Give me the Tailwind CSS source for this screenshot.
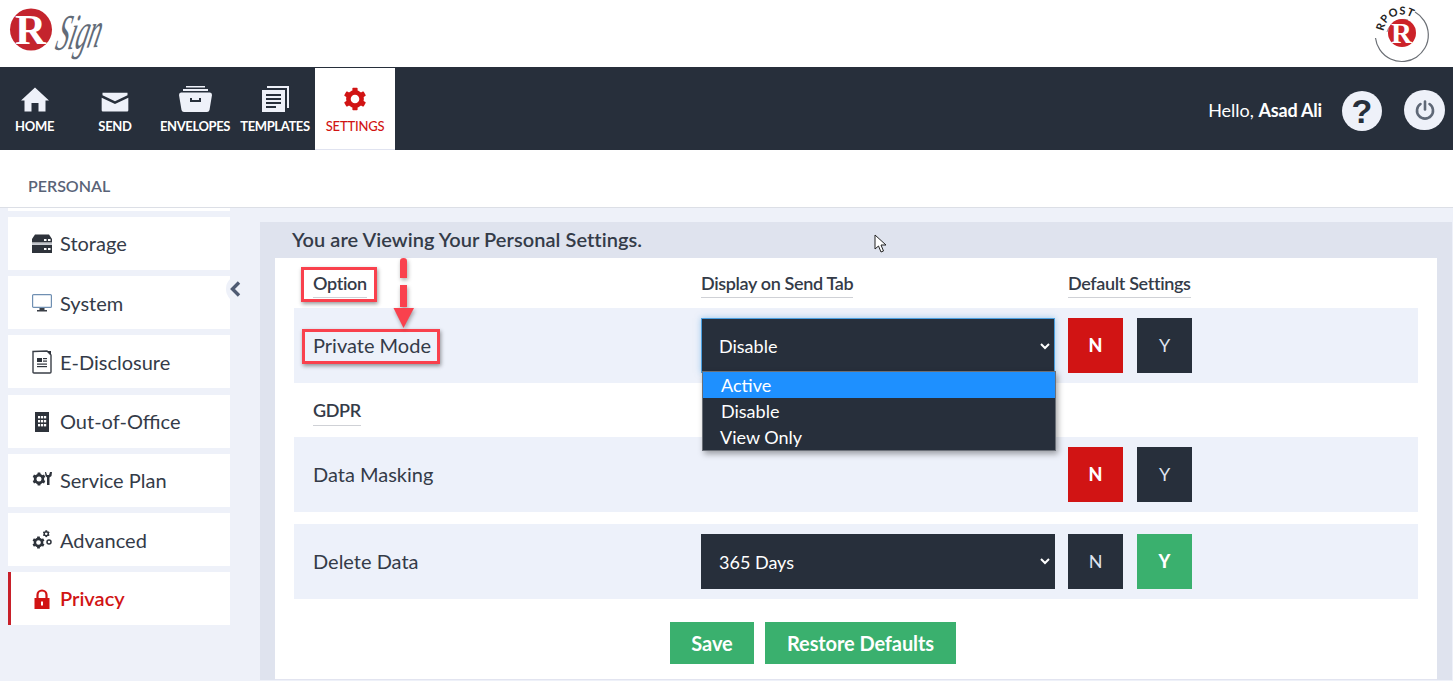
<!DOCTYPE html>
<html lang="en">
<head>
    <meta charset="utf-8" />
    <meta name="viewport" content="width=device-width, initial-scale=1.0" />
    <title>RSign Personal Settings</title>
    <script src="https://cdn.jsdelivr.net/npm/@tailwindcss/browser@4"></script>
</head>
<body class="relative w-[1453px] h-[681px] overflow-hidden bg-[#eef1f9] font-['Lato',sans-serif] text-[#343b48]">
    <!-- Shared cog shape -->
    <svg width="0" height="0" class="absolute">
        <symbol id="cog" viewBox="0 0 24 24">
            <circle cx="12" cy="12" r="6.6" fill="none" stroke="currentColor" stroke-width="4.6" />
            <g fill="currentColor">
                <rect x="9.4" y="0.8" width="5.2" height="6" rx="0.8" />
                <rect x="9.4" y="0.8" width="5.2" height="6" rx="0.8" transform="rotate(60 12 12)" />
                <rect x="9.4" y="0.8" width="5.2" height="6" rx="0.8" transform="rotate(120 12 12)" />
                <rect x="9.4" y="0.8" width="5.2" height="6" rx="0.8" transform="rotate(180 12 12)" />
                <rect x="9.4" y="0.8" width="5.2" height="6" rx="0.8" transform="rotate(240 12 12)" />
                <rect x="9.4" y="0.8" width="5.2" height="6" rx="0.8" transform="rotate(300 12 12)" />
            </g>
        </symbol>
    </svg>

    <!-- Logo bar -->
    <header class="h-[67px] bg-white flex justify-between">
        <svg width="120" height="67" viewBox="0 0 120 67">
            <circle cx="31" cy="29.5" r="21" fill="#c4242d" />
            <text x="15" y="44" font-family="Liberation Serif" font-weight="700" font-size="43" fill="#fff">R</text>
            <g transform="translate(54 50) rotate(-4) skewX(-18) scale(0.5 1)">
                <text x="0" y="0" font-family="Liberation Serif" font-style="italic" font-size="50" fill="#626b78">Sign</text>
            </g>
        </svg>
        <svg width="80" height="67" viewBox="1373 0 80 67">
            <path d="M1415 12 A26.500 26.500 0 1 1 1375.500 38" fill="none" stroke="#6b6f75" stroke-width="1.2" />
            <path d="M1387 32 A17 17 0 0 1 1408 20" fill="none" stroke="#9a9da2" stroke-width="1" />
            <path id="rpostArc" d="M1383.600 31.400 A18.500 18.500 0 0 1 1414 19" fill="none" />
            <text font-family="Lato" font-weight="700" font-size="11" fill="#222" letter-spacing="0.6"><textPath href="#rpostArc">RPOST</textPath></text>
            <circle cx="1402" cy="33" r="14" fill="#cc2229" />
            <text x="1391" y="43" font-family="Liberation Serif" font-weight="700" font-size="29" fill="#fff">R</text>
        </svg>
    </header>

    <!-- Main nav -->
    <nav class="h-[83px] bg-[#272f3b] flex text-white text-[13px] leading-[20px] font-bold">
        <a class="w-[75px] pl-[15px] pt-[19px] flex flex-col items-start">
            <span class="h-[26px] flex items-end ml-[6px]">
                <svg class="w-[28px] h-[25px]" viewBox="0 0 28 24" fill="#eef1f9"><path d="M14 0 L28 13 L24.500 13 L24.500 24 L17.500 24 L17.500 15.500 L10.500 15.500 L10.500 24 L3.500 24 L3.500 13 L0 13 Z" /></svg>
            </span>
            <span class="mt-[4px] tracking-[-0.3px]">HOME</span>
        </a>
        <a class="w-[80px] pt-[19px] flex flex-col items-center">
            <span class="h-[26px] flex items-end">
                <svg class="w-[32px] h-[20px]" viewBox="0 0 32 24" fill="#eef1f9"><path d="M1 1 L31 1 L31 4 L16 11 L1 4 Z" /><path d="M0 7 L16 14.500 L32 7 L32 22 Q32 23.500 30.500 23.500 L1.500 23.500 Q0 23.500 0 22 Z" /></svg>
            </span>
            <span class="mt-[4px] tracking-[-0.3px]">SEND</span>
        </a>
        <a class="w-[80px] pt-[19px] flex flex-col items-center">
            <span class="h-[26px] flex items-end">
                <svg class="w-[33px] h-[26px]" viewBox="0 0 33 26" fill="#eef1f9"><rect x="7" y="0" width="19" height="1.500" /><rect x="4" y="3" width="25" height="2" /><path d="M2 6.500 L31 6.500 Q33 6.500 33 9 L30.500 24 Q30 26 28 26 L5 26 Q3 26 2.500 24 L0 9 Q0 6.500 2 6.500 Z M11 12 L11 16 L22 16 L22 12 L20 12 L20 14 L13 14 L13 12 Z" fill-rule="evenodd" /></svg>
            </span>
            <span class="mt-[4px] tracking-[-0.4px]">ENVELOPES</span>
        </a>
        <a class="w-[80px] pt-[19px] flex flex-col items-center">
            <span class="h-[26px] flex items-end">
                <svg class="w-[27px] h-[26px]" viewBox="0 0 27 26" fill="#eef1f9"><path d="M5 0 L27 0 L27 22 L25 22 L25 2 L5 2 Z" /><path d="M0 4 L23 4 L23 26 L0 26 Z M4 8 L4 10 L19 10 L19 8 Z M4 12 L4 14 L19 14 L19 12 Z M4 16 L4 18 L19 18 L19 16 Z M4 20 L4 22 L14 22 L14 20 Z" fill-rule="evenodd" /></svg>
            </span>
            <span class="mt-[4px] tracking-[-0.4px]">TEMPLATES</span>
        </a>
        <a class="w-[80px] h-[82px] mt-px bg-white border-b border-[#e0e3f0] flex flex-col items-center pt-[19px] text-[#d11414] font-medium">
            <svg class="w-[24px] h-[24px]"><use href="#cog" /></svg>
            <span class="mt-[5px] tracking-[-0.2px]">SETTINGS</span>
        </a>
        <div class="ml-auto flex items-center pr-[8px] pt-[3px] font-normal">
            <span class="text-[18px] leading-[24px]">Hello, <b class="font-bold tracking-[-0.2px]">Asad Ali</b></span>
            <span class="ml-[20px] mt-px w-[40px] h-[40px] rounded-full bg-[#eef1f9] text-[#272f3b] flex items-center justify-center text-[34px] leading-none font-bold font-['Liberation_Sans',sans-serif]">?</span>
            <span class="ml-[22px] w-[41px] h-[40px] rounded-full bg-[#eef1f9] flex items-center justify-center">
                <svg class="w-[20px] h-[20px]" viewBox="0 0 20 20" fill="none" stroke="#5f6877" stroke-width="2.600" stroke-linecap="round"><path d="M10 1.500 L10 9.500" /><path d="M5.500 4 A8 8 0 1 0 14.500 4" /></svg>
            </span>
        </div>
    </nav>

    <!-- Section title -->
    <div class="h-[58px] bg-white border-b border-[#dcdfe6] pl-[28px] pt-[27px] text-[16px] leading-[18px] font-semibold text-[#596377]">PERSONAL</div>

    <div class="flex">
        <!-- Settings menu -->
        <aside class="relative w-[260px] pl-[8px] pr-[30px] flex flex-col gap-[6px] text-[20px]">
            <div class="h-[3px] bg-white"></div>
            <a class="h-[53px] bg-white flex items-center pl-[24px] gap-[8px]">
                <svg class="w-[20px] h-[20px]" viewBox="0 0 20 20"><path d="M3 0.500 L17 0.500 L20 5 L20 8.500 L0 8.500 L0 5 Z" fill="#2e333b" /><rect y="11" width="20" height="8" fill="#2e333b" /><rect y="8.800" width="20" height="2" fill="#bfc3c9" /><rect x="12" y="5" width="2.500" height="2" fill="#fff" /><rect x="16" y="5" width="2.500" height="2" fill="#fff" /><rect x="12" y="14" width="2.500" height="2" fill="#fff" /><rect x="16" y="14" width="2.500" height="2" fill="#fff" /></svg>
                <span class="mb-px">Storage</span>
            </a>
            <a class="h-[53px] bg-white flex items-center pl-[24px] gap-[8px]">
                <svg class="w-[20px] h-[20px]" viewBox="0 0 20 20"><rect x="0.600" y="1.600" width="18.800" height="12.800" rx="1" fill="#fff" stroke="#6f8fb2" stroke-width="1.200" /><rect x="7.500" y="15" width="5" height="2" fill="#3a3f47" /><rect x="5" y="17" width="10" height="1.500" fill="#3a3f47" /></svg>
                <span>System</span>
            </a>
            <a class="h-[53px] bg-white flex items-center pl-[24px] gap-[8px]">
                <svg class="w-[20px] h-[24px]" viewBox="0 0 20 24"><path d="M1 1.500 L15 1 L19 5 L19 22 Q19 23 18 23 L2 23 Q1 23 1 22 Z" fill="#fff" stroke="#3a3f47" stroke-width="1.400" /><path d="M15 1 L19 1 L19 5 Z" fill="#2e333b" /><rect x="5" y="8" width="5" height="4" fill="#2e333b" /><rect x="11" y="8" width="4" height="1.200" fill="#2e333b" /><rect x="11" y="10.500" width="4" height="1.200" fill="#2e333b" /><rect x="5" y="13.500" width="10" height="1.200" fill="#2e333b" /><rect x="5" y="16" width="10" height="1.200" fill="#2e333b" /></svg>
                <span>E-Disclosure</span>
            </a>
            <a class="h-[53px] mt-px bg-white flex items-center pl-[24px] gap-[8px]">
                <svg class="w-[20px] h-[20px]" viewBox="0 0 20 20"><path d="M3 0 L17 0 L17 20 L3 20 Z" fill="#2e333b" /><g fill="#fff"><rect x="6" y="4" width="2.200" height="2.400" /><rect x="9" y="4" width="2.200" height="2.400" /><rect x="12" y="4" width="2.200" height="2.400" /><rect x="6" y="8" width="2.200" height="2.400" /><rect x="9" y="8" width="2.200" height="2.400" /><rect x="12" y="8" width="2.200" height="2.400" /><rect x="6" y="12" width="2.200" height="2.400" /><rect x="9" y="12" width="2.200" height="2.400" /><rect x="12" y="12" width="2.200" height="2.400" /></g></svg>
                <span class="mb-px">Out-of-Office</span>
            </a>
            <a class="h-[53px] bg-white flex items-center pl-[24px] gap-[8px]">
                <svg class="w-[20px] h-[20px] text-[#2e333b]" viewBox="0 0 20 20"><use href="#cog" width="14" height="14" y="1" /><path d="M14 1 L15 4 L17 4 L18 1 L20 1 L19.500 5 L17.500 6.500 L17.500 14 L15 14 L15 6.500 L13.500 5 L13 1 Z" fill="currentColor" /></svg>
                <span class="mb-px">Service Plan</span>
            </a>
            <a class="h-[53px] bg-white flex items-center pl-[24px] gap-[8px]">
                <svg class="w-[20px] h-[20px] text-[#2e333b]" viewBox="0 0 20 20"><use href="#cog" width="13" height="13" y="6" /><use href="#cog" width="7.500" height="7.500" x="10.500" y="0" /><circle cx="17" cy="12" r="2" fill="none" stroke="currentColor" stroke-width="1.500" /></svg>
                <span>Advanced</span>
            </a>
            <a class="h-[53px] bg-white border-l-[3px] border-[#c8202a] flex items-center pl-[21px] gap-[8px] text-[#d11414] font-semibold">
                <svg class="w-[20px] h-[20px]" viewBox="0 0 20 20"><path d="M5.500 9 L5.500 6 A4.500 4.500 0 0 1 14.500 6 L14.500 9" fill="none" stroke="#d11414" stroke-width="2.200" /><path d="M2.500 9 L17.500 9 L17.500 20 L2.500 20 Z M9 12.500 L9 16.500 L11 16.500 L11 12.500 Z" fill="#d11414" fill-rule="evenodd" /></svg>
                <span class="mb-px">Privacy</span>
            </a>
            <!-- Collapse handle -->
            <div class="absolute left-[226px] top-[67px] w-[16px] h-[28px] rounded-l-full bg-[#eef1f9] flex items-center justify-center">
                <svg class="w-[12px] h-[16px] ml-[1px]" viewBox="0 0 12 16" fill="none" stroke="#4f5b73" stroke-width="3.400"><path d="M10 1.500 L3.500 8 L10 14.500" /></svg>
            </div>
        </aside>

        <!-- Settings panel -->
        <main class="w-[1192px] mt-[14px] bg-[#dfe3ee] px-[15px]">
            <h1 class="h-[36px] pl-[17px] pt-[5px] text-[20px] leading-[24px] font-semibold tracking-[0.05px] text-[#343b48]">You are Viewing Your Personal Settings.</h1>
            <div class="h-[422px] bg-white px-[19px] border-b border-[#e2e4f0]">
                <div class="h-[50px] flex text-[18px] font-semibold tracking-[-0.35px]">
                    <div class="w-[407px] pl-[19px] pt-[12px]"><span class="block w-fit h-[28px] leading-[26px] border-b border-[#cfd1d6]">Option</span></div>
                    <div class="w-[367px] pt-[12px]"><span class="block w-fit h-[28px] leading-[26px] border-b border-[#cfd1d6]">Display on Send Tab</span></div>
                    <div class="pt-[12px]"><span class="block w-fit h-[28px] leading-[26px] border-b border-[#cfd1d6]">Default Settings</span></div>
                </div>

                <div class="h-[75px] bg-[#edf1fa] flex items-center text-[20px]">
                    <div class="w-[407px] pl-[19px] mb-px">Private Mode</div>
                    <div class="w-[354px] h-[55px] bg-[#272f3b] border border-[#4a9fe0] shadow-[0_0_6px_rgba(74,159,224,0.5)] text-white text-[18px] flex items-center justify-between pl-[17px] pr-[4px]">
                        <span class="mt-px">Disable</span>
                        <svg class="w-[10px] h-[7px] mt-px" viewBox="0 0 10 7" fill="none" stroke="#fff" stroke-width="2"><path d="M1 1 L5 5 L9 1" /></svg>
                    </div>
                    <div class="ml-[13px] w-[55px] h-[55px] bg-[#d11414] text-white font-black text-[18px] flex items-center justify-center">N</div>
                    <div class="ml-[14px] w-[55px] h-[55px] bg-[#272f3b] text-[#dfe3ee] text-[18px] flex items-center justify-center">Y</div>
                </div>

                <div class="h-[54px] pl-[19px] pt-[15px] text-[18px] font-semibold tracking-[-0.35px]">
                    <span class="block w-fit h-[28px] leading-[24px] border-b border-[#cfd1d6]">GDPR</span>
                </div>

                <div class="h-[75px] bg-[#edf1fa] flex items-center text-[20px]">
                    <div class="w-[761px] pl-[19px] mb-px">Data Masking</div>
                    <div class="ml-[13px] w-[55px] h-[55px] bg-[#d11414] text-white font-black text-[18px] flex items-center justify-center">N</div>
                    <div class="ml-[14px] w-[55px] h-[55px] bg-[#272f3b] text-[#dfe3ee] text-[18px] flex items-center justify-center">Y</div>
                </div>

                <div class="h-[75px] mt-[12px] bg-[#edf1fa] flex items-center text-[20px]">
                    <div class="w-[407px] pl-[19px] mb-px">Delete Data</div>
                    <div class="w-[354px] h-[55px] bg-[#272f3b] text-white text-[18px] flex items-center justify-between pl-[18px] pr-[5px]">
                        <span class="mt-px">365 Days</span>
                        <svg class="w-[10px] h-[7px]" viewBox="0 0 10 7" fill="none" stroke="#fff" stroke-width="2"><path d="M1 1 L5 5 L9 1" /></svg>
                    </div>
                    <div class="ml-[13px] w-[55px] h-[55px] bg-[#272f3b] text-[#dfe3ee] text-[18px] flex items-center justify-center">N</div>
                    <div class="ml-[14px] w-[55px] h-[55px] bg-[#3ab06e] text-white font-black text-[18px] flex items-center justify-center">Y</div>
                </div>

                <div class="mt-[23px] pl-[376px] flex gap-[11px] text-white text-[20px] font-bold tracking-[-0.1px]">
                    <button class="w-[84px] h-[42px] bg-[#3ab06e]">Save</button>
                    <button class="w-[191px] h-[42px] bg-[#3ab06e]">Restore Defaults</button>
                </div>
            </div>
        </main>
    </div>

    <!-- Open dropdown list -->
    <ul class="absolute left-[702px] top-[371px] w-[354px] h-[80px] bg-[#272f3b] border border-[#6b7078] shadow-[2px_3px_6px_rgba(0,0,0,0.35)] text-white text-[18px] leading-[26px]">
        <li class="bg-[#1e90ff] pl-[18px]">Active</li>
        <li class="pl-[18px]">Disable</li>
        <li class="pl-[17px]">View Only</li>
    </ul>

    <!-- Annotations drawn on the screenshot -->
    <div class="absolute left-[301px] top-[267px] w-[76px] h-[35px] border-[3px] border-[#f9414d] shadow-[1px_2px_4px_rgba(0,0,0,0.4)]"></div>
    <div class="absolute left-[302px] top-[329px] w-[138px] h-[35px] border-[3px] border-[#f9414d] shadow-[1px_2px_4px_rgba(0,0,0,0.4)]"></div>
    <svg class="absolute left-[390px] top-[255px]" width="28" height="76" viewBox="0 0 28 76" style="filter:drop-shadow(1px 2px 2px rgba(0,0,0,.35))">
        <path d="M10 6 Q10 3 13.500 3 Q17 3 17 6 L17 23 L10 23 Z" fill="#f9414d" />
        <rect x="10" y="30" width="7" height="22" fill="#f9414d" />
        <path d="M3.500 53 L24 53 L13.500 73 Z" fill="#f9414d" />
    </svg>
    <svg class="absolute left-[874px] top-[234px]" width="14" height="20" viewBox="0 0 14 20"><path d="M1 1 L1 15 L4.500 12 L7 18 L9.500 17 L7 11 L12 11 Z" fill="#fff" stroke="#222" stroke-width="1" /></svg>
</body>
</html>
